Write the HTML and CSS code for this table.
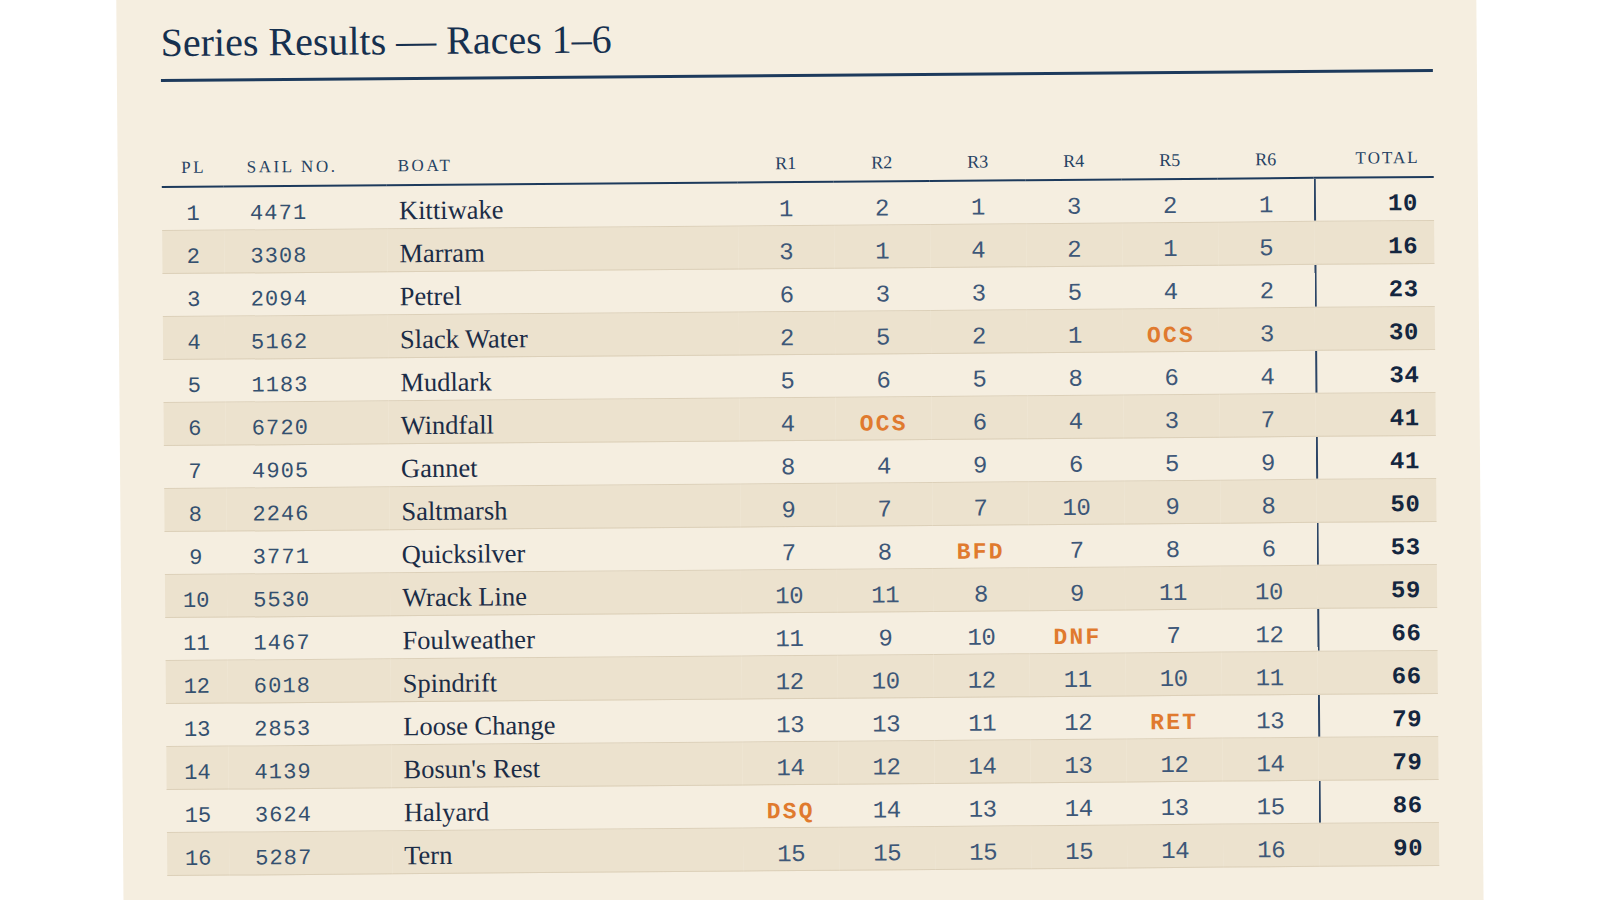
FILE: index.html
```
<!DOCTYPE html>
<html lang="en">
<head>
<meta charset="utf-8">
<title>Series Results</title>
<link rel="stylesheet" href="styles.css">
</head>
<body>
<main class="sheet">
  <h1 class="title">Series Results — Races 1–6</h1>
  <table class="results">
    <colgroup>
      <col class="w-pl"><col class="w-sail"><col class="w-boat">
      <col class="w-race"><col class="w-race"><col class="w-race"><col class="w-race"><col class="w-race"><col class="w-race">
      <col class="w-total">
    </colgroup>
    <thead>
      <tr>
        <th class="c-pl">Pl</th><th class="c-sail">Sail No.</th><th class="c-boat">Boat</th>
        <th class="c-race">R1</th><th class="c-race">R2</th><th class="c-race">R3</th><th class="c-race">R4</th><th class="c-race">R5</th><th class="c-race">R6</th>
        <th class="c-total">Total</th>
      </tr>
    </thead>
    <tbody>
      <tr><td class="c-pl">1</td><td class="c-sail">4471</td><td class="c-boat">Kittiwake</td><td class="c-race">1</td><td class="c-race">2</td><td class="c-race">1</td><td class="c-race">3</td><td class="c-race">2</td><td class="c-race">1</td><td class="c-total">10</td></tr>
      <tr><td class="c-pl">2</td><td class="c-sail">3308</td><td class="c-boat">Marram</td><td class="c-race">3</td><td class="c-race">1</td><td class="c-race">4</td><td class="c-race">2</td><td class="c-race">1</td><td class="c-race">5</td><td class="c-total">16</td></tr>
      <tr><td class="c-pl">3</td><td class="c-sail">2094</td><td class="c-boat">Petrel</td><td class="c-race">6</td><td class="c-race">3</td><td class="c-race">3</td><td class="c-race">5</td><td class="c-race">4</td><td class="c-race">2</td><td class="c-total">23</td></tr>
      <tr><td class="c-pl">4</td><td class="c-sail">5162</td><td class="c-boat">Slack Water</td><td class="c-race">2</td><td class="c-race">5</td><td class="c-race">2</td><td class="c-race">1</td><td class="c-race"><span class="pen">OCS</span></td><td class="c-race">3</td><td class="c-total">30</td></tr>
      <tr><td class="c-pl">5</td><td class="c-sail">1183</td><td class="c-boat">Mudlark</td><td class="c-race">5</td><td class="c-race">6</td><td class="c-race">5</td><td class="c-race">8</td><td class="c-race">6</td><td class="c-race">4</td><td class="c-total">34</td></tr>
      <tr><td class="c-pl">6</td><td class="c-sail">6720</td><td class="c-boat">Windfall</td><td class="c-race">4</td><td class="c-race"><span class="pen">OCS</span></td><td class="c-race">6</td><td class="c-race">4</td><td class="c-race">3</td><td class="c-race">7</td><td class="c-total">41</td></tr>
      <tr><td class="c-pl">7</td><td class="c-sail">4905</td><td class="c-boat">Gannet</td><td class="c-race">8</td><td class="c-race">4</td><td class="c-race">9</td><td class="c-race">6</td><td class="c-race">5</td><td class="c-race">9</td><td class="c-total">41</td></tr>
      <tr><td class="c-pl">8</td><td class="c-sail">2246</td><td class="c-boat">Saltmarsh</td><td class="c-race">9</td><td class="c-race">7</td><td class="c-race">7</td><td class="c-race">10</td><td class="c-race">9</td><td class="c-race">8</td><td class="c-total">50</td></tr>
      <tr><td class="c-pl">9</td><td class="c-sail">3771</td><td class="c-boat">Quicksilver</td><td class="c-race">7</td><td class="c-race">8</td><td class="c-race"><span class="pen">BFD</span></td><td class="c-race">7</td><td class="c-race">8</td><td class="c-race">6</td><td class="c-total">53</td></tr>
      <tr><td class="c-pl">10</td><td class="c-sail">5530</td><td class="c-boat">Wrack Line</td><td class="c-race">10</td><td class="c-race">11</td><td class="c-race">8</td><td class="c-race">9</td><td class="c-race">11</td><td class="c-race">10</td><td class="c-total">59</td></tr>
      <tr><td class="c-pl">11</td><td class="c-sail">1467</td><td class="c-boat">Foulweather</td><td class="c-race">11</td><td class="c-race">9</td><td class="c-race">10</td><td class="c-race"><span class="pen">DNF</span></td><td class="c-race">7</td><td class="c-race">12</td><td class="c-total">66</td></tr>
      <tr><td class="c-pl">12</td><td class="c-sail">6018</td><td class="c-boat">Spindrift</td><td class="c-race">12</td><td class="c-race">10</td><td class="c-race">12</td><td class="c-race">11</td><td class="c-race">10</td><td class="c-race">11</td><td class="c-total">66</td></tr>
      <tr><td class="c-pl">13</td><td class="c-sail">2853</td><td class="c-boat">Loose Change</td><td class="c-race">13</td><td class="c-race">13</td><td class="c-race">11</td><td class="c-race">12</td><td class="c-race"><span class="pen">RET</span></td><td class="c-race">13</td><td class="c-total">79</td></tr>
      <tr><td class="c-pl">14</td><td class="c-sail">4139</td><td class="c-boat">Bosun's Rest</td><td class="c-race">14</td><td class="c-race">12</td><td class="c-race">14</td><td class="c-race">13</td><td class="c-race">12</td><td class="c-race">14</td><td class="c-total">79</td></tr>
      <tr><td class="c-pl">15</td><td class="c-sail">3624</td><td class="c-boat">Halyard</td><td class="c-race"><span class="pen">DSQ</span></td><td class="c-race">14</td><td class="c-race">13</td><td class="c-race">14</td><td class="c-race">13</td><td class="c-race">15</td><td class="c-total">86</td></tr>
      <tr><td class="c-pl">16</td><td class="c-sail">5287</td><td class="c-boat">Tern</td><td class="c-race">15</td><td class="c-race">15</td><td class="c-race">15</td><td class="c-race">15</td><td class="c-race">14</td><td class="c-race">16</td><td class="c-total">90</td></tr>
    </tbody>
  </table>
</main>
</body>
</html>
```

FILE: styles.css
```
html, body {
  margin: 0;
  padding: 0;
  background: #ffffff;
  overflow: hidden;
}

.sheet {
  width: 1360px;
  box-sizing: border-box;
  margin: -20px auto 0;
  padding: 34px 44px 70px;
  background: #f5eee0;
  transform: rotate(-0.46deg);
}

.title {
  margin: 0;
  padding-bottom: 12px;
  border-bottom: 3px solid #1d3a5c;
  font: 400 40px/48px "Liberation Serif", serif;
  color: #16304f;
}

.results {
  width: 100%;
  margin-top: 76px;
  border-collapse: collapse;
  table-layout: fixed;
}

.w-pl { width: 62px; }
.w-sail { width: 163px; }
.w-boat { width: 351px; }
.w-race { width: 96px; }
.w-total { width: 120px; }

.results th {
  padding: 0 0 8px;
  border-bottom: 2px solid #1d3a5c;
  font: 400 17px/20px "Liberation Serif", serif;
  letter-spacing: 2.6px;
  text-transform: uppercase;
  color: #264263;
  text-align: left;
}

.results th.c-pl { text-align: center; padding-left: 2px; }
.results th.c-sail { padding-left: 23px; }
.results th.c-boat { padding-left: 11px; }
.results th.c-race { text-align: center; letter-spacing: 0; font-size: 18px; }
.results th.c-total { text-align: right; padding-right: 14px; letter-spacing: 2px; }

.results td {
  padding: 0;
  line-height: 28px;
  vertical-align: top;
  border-bottom: 1px solid #dcd0b9;
  white-space: nowrap;
}

.results tbody tr:nth-child(even) td {
  background: #ece2ce;
}

.results td.c-pl {
  padding: 13px 0 1px;
  text-align: center;
  font: 400 22px/28px "Liberation Mono", monospace;
  color: #34506f;
}

.results td.c-sail {
  padding: 13px 0 1px 26px;
  font: 400 22px/28px "Liberation Mono", monospace;
  letter-spacing: 1.1px;
  color: #34506f;
}

.results td.c-boat {
  padding: 10px 0 4px 12px;
  font: 400 26.5px/28px "Liberation Serif", serif;
  color: #1b2c46;
}

.results td.c-race {
  padding: 13px 0 1px;
  text-align: center;
  font: 400 24px/28px "Liberation Mono", monospace;
  letter-spacing: -0.4px;
  color: #3d5778;
}

.results td.c-total {
  padding: 12px 16px 2px 0;
  text-align: right;
  font: 700 24px/28px "Liberation Mono", monospace;
  letter-spacing: 0.6px;
  color: #14263f;
}

.results tbody tr:nth-child(odd) td.c-total {
  box-shadow: inset 2px 0 0 #2c4566;
}

.pen {
  font: 700 23px/1 "Liberation Mono", monospace;
  letter-spacing: 2.2px;
  color: #e07a2e;
}
```
